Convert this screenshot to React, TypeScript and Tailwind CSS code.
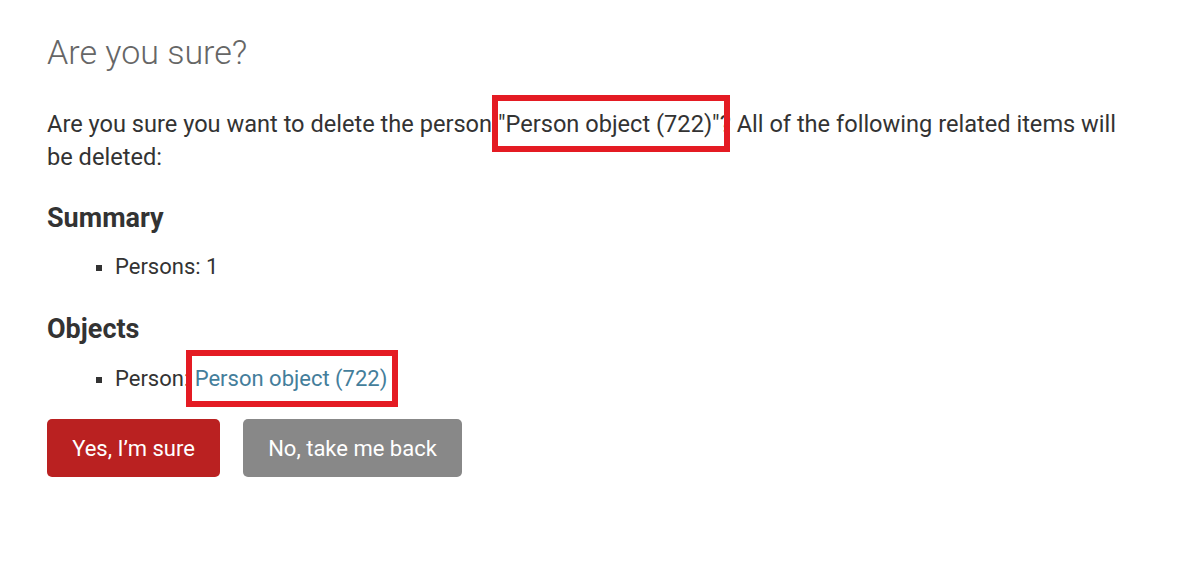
import React from 'react';

const Mark = ({ className }: { className: string }) => (
  <span className={`pointer-events-none absolute border-[6px] border-[#e41b23] ${className}`} />
);

export default function App() {
  return (
    <div
      className="min-h-[562px] bg-white pl-[47px] pr-[66px] pt-[32px] text-[#333]"
      style={{ fontFamily: 'Roboto, "Liberation Sans", sans-serif' }}
    >
      <h1 className="text-[34px] leading-[40px] font-light text-[#666]">Are you sure?</h1>

      <p className="mt-[36px] text-[23.6px] leading-[33px]">
        Are you sure you want to delete the person{' '}
        <span className="relative">
          "Person object (722)"
          <Mark className="-left-[6px] -right-[10px] -top-[15px] -bottom-[14px]" />
        </span>
        ? All of the following related items will be deleted:
      </p>

      <h2 className="mt-[28px] text-[27px] leading-[32px] font-bold">Summary</h2>
      <ul className="mt-[17px] pl-[49px] text-[22px] leading-[32px]">
        <li>
          <span className="mr-[13px] inline-block h-[6px] w-[6px] bg-[#333] align-middle" />
          Persons: 1
        </li>
      </ul>

      <h2 className="mt-[30px] text-[27px] leading-[32px] font-bold">Objects</h2>
      <ul className="mt-[18px] pl-[49px] text-[22px] leading-[32px]">
        <li>
          <span className="mr-[13px] inline-block h-[6px] w-[6px] bg-[#333] align-middle" />
          Person:{' '}
          <span className="relative">
            <a href="#" className="text-[#447e9b]">Person object (722)</a>
            <Mark className="-left-[9px] -right-[11px] -top-[16px] -bottom-[16px]" />
          </span>
        </li>
      </ul>

      <div className="mt-[24px] flex gap-[23px]">
        <button className="flex h-[58px] w-[173px] items-center justify-center rounded-[5px] bg-[#ba2121] text-[22px] text-white">
          Yes, I’m sure
        </button>
        <button className="flex h-[58px] w-[219px] items-center justify-center rounded-[5px] bg-[#888] text-[22px] text-white">
          No, take me back
        </button>
      </div>
    </div>
  );
}
